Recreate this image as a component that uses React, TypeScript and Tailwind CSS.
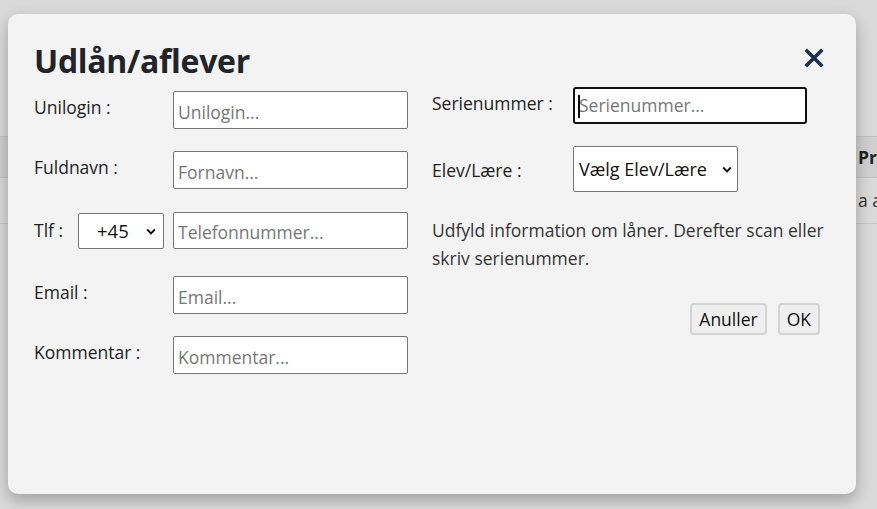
import React from 'react';

const font = { fontFamily: '"Open Sans", "Noto Sans", Arial, sans-serif' };

function Chevron({ className }: { className?: string }) {
  return (
    <svg viewBox="0 0 10 6" className={className} fill="none" stroke="#111" strokeWidth="1.9">
      <path d="M1.2 1l3.8 3.8 3.8-3.8" />
    </svg>
  );
}

function Field({ label, placeholder, top }: { label: string; placeholder: string; top: string }) {
  return (
    <div className={`flex items-center ${top}`}>
      <span className="w-[139px] pb-[6px] text-[#222]">{label}</span>
      <input
        placeholder={placeholder}
        className="w-[235px] h-[38px] border border-[#767676] rounded-[2px] bg-white px-[4px] pt-[4px] text-[17.5px] placeholder:text-[#767676] outline-none"
      />
    </div>
  );
}

export default function App() {
  return (
    <div className="relative w-[877px] h-[509px] overflow-hidden bg-[#dadada] text-[17.5px]" style={font}>
      {/* page behind the dialog */}
      <div className="pt-[136px]">
        <div className="h-[42px] border-t border-b border-[#c2c2c2] bg-[#d0d0d0] flex items-center">
          <span className="ml-[858px] font-bold text-[#222]">Pr</span>
        </div>
        <div className="h-[46px] border-b border-[#c6c6c6] flex items-center whitespace-nowrap">
          <span className="ml-[858px] text-[#333]">a a</span>
        </div>
      </div>

      {/* dialog */}
      <div className="absolute left-[8px] top-[14px] w-[848px] h-[480px] rounded-[10px] bg-[#f3f3f3] shadow-[0_6px_16px_rgba(0,0,0,0.28)] px-[26px] pt-[26px]">
        <div className="flex items-start justify-between">
          <h1 className="text-[32px] leading-[42px] font-bold text-[#212529] tracking-[-0.3px]">Udlån/aflever</h1>
          <button className="mt-[8px] mr-[6px]">
            <svg viewBox="0 0 20 20" className="w-[20px] h-[20px]" stroke="#1c3150" strokeWidth="3.6" strokeLinecap="square">
              <path d="M3 3l14 14M17 3L3 17" />
            </svg>
          </button>
        </div>

        <div className="flex -mt-[4px]">
          {/* left column */}
          <div className="w-[374px]">
            <Field label="Unilogin :" placeholder="Unilogin..." top="mt-[13px]" />
            <Field label="Fuldnavn :" placeholder="Fornavn..." top="mt-[22px]" />
            <div className="flex items-center mt-[23px]">
              <span className="w-[44px] text-[#222]">Tlf :</span>
              <div className="relative w-[86px] h-[36px] border border-[#767676] rounded-[2px] bg-white flex items-center">
                <span className="ml-[18px] text-[18.5px] text-[#111]">+45</span>
                <Chevron className="absolute right-[7px] top-[14px] w-[10px] h-[7px]" />
              </div>
              <input
                placeholder="Telefonnummer..."
                className="ml-[9px] w-[235px] h-[37px] border border-[#767676] rounded-[2px] bg-white px-[4px] pt-[2px] text-[17.5px] placeholder:text-[#767676] outline-none"
              />
            </div>
            <Field label="Email :" placeholder="Email..." top="mt-[27px]" />
            <Field label="Kommentar :" placeholder="Kommentar..." top="mt-[22px]" />
          </div>

          {/* right column */}
          <div className="ml-[24px] w-[404px]">
            <div className="flex items-center mt-[9px]">
              <span className="w-[141px] pb-[4px] text-[#222]">Serienummer :</span>
              <div className="relative w-[234px] h-[37px] border-2 border-[#101010] rounded-[3px] bg-white flex items-center">
                <span className="absolute left-[3px] top-[6px] w-[2px] h-[23px] bg-black" />
                <span className="ml-[4px] text-[#767676]">Serienummer...</span>
              </div>
            </div>
            <div className="flex items-center mt-[22px]">
              <span className="w-[141px] pt-[3px] text-[#222]">Elev/Lære :</span>
              <div className="relative w-[165px] h-[46px] border border-[#767676] rounded-[2px] bg-white flex items-center">
                <span className="ml-[5px] text-[18px] text-[#111]">Vælg Elev/Lære</span>
                <Chevron className="absolute right-[5px] top-[19px] w-[10px] h-[7px]" />
              </div>
            </div>
            <p className="mt-[24px] leading-[28px] text-[#333]">
              Udfyld information om låner. Derefter scan eller skriv serienummer.
            </p>
            <div className="flex justify-end gap-[11px] mt-[31px] pr-[10px]">
              <button className="h-[32px] px-[7px] rounded-[4px] border-2 border-[#d4d4d4] bg-[#efefef] text-[#111]">Anuller</button>
              <button className="h-[32px] px-[7px] rounded-[4px] border-2 border-[#d4d4d4] bg-[#efefef] text-[#111]">OK</button>
            </div>
          </div>
        </div>
      </div>
    </div>
  );
}
